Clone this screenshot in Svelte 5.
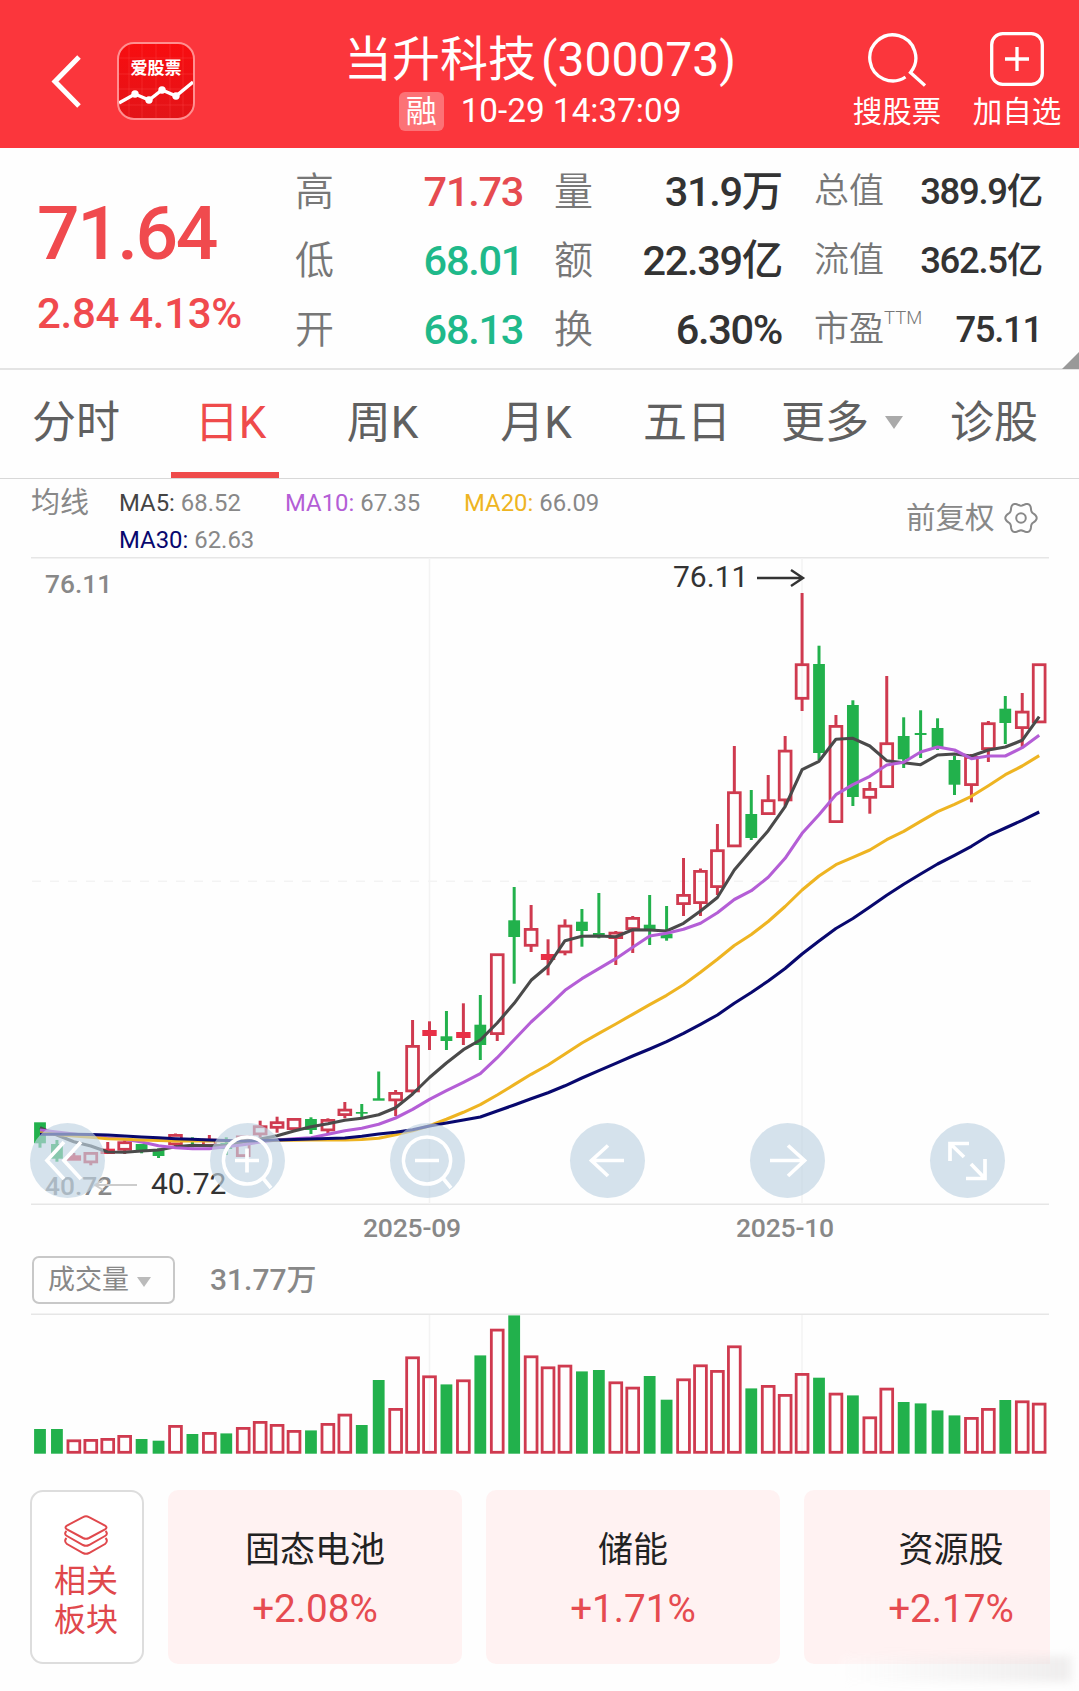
<script lang="ts">
	type Candle = [color: 'r' | 'g', high: number, top: number, bottom: number, low: number, volume: number];

	const FIRST_X = 40;
	const STEP = 16.935;
	const BODY = 11.8;
	const STROKE = 2.8;
	const VOLUME_BASE = 1453.7;

	const candles: Candle[] = [
		['g', 1122.3, 1122.3, 1143.3, 1147.7, 24.7],
		['g', 1140, 1144, 1158.7, 1161.7, 24.7],
		['r', 1153, 1155.3, 1160.7, 1160.7, 14.3],
		['r', 1152, 1152, 1163.3, 1165.3, 14.7],
		['r', 1142, 1148.7, 1154, 1154, 15.7],
		['r', 1140, 1141.3, 1150.7, 1154, 18.7],
		['g', 1144, 1144, 1150.7, 1153.3, 14.7],
		['g', 1148.3, 1149.3, 1156, 1158, 13],
		['r', 1133.5, 1134, 1145.3, 1148, 28.7],
		['g', 1137.3, 1140, 1142, 1147.3, 19.7],
		['r', 1135, 1138.7, 1146.7, 1147, 21.7],
		['g', 1137.3, 1143, 1149, 1155, 20.3],
		['r', 1135.5, 1135.5, 1157, 1157, 26.7],
		['r', 1120.7, 1125.3, 1135.3, 1137.3, 32.7],
		['r', 1116.7, 1121.3, 1128.7, 1132.7, 29.7],
		['r', 1118, 1118, 1130, 1131.3, 23.7],
		['g', 1117.3, 1119, 1130, 1134, 23.3],
		['r', 1118.3, 1119, 1131.3, 1133.3, 30.7],
		['r', 1102, 1108.7, 1116, 1118.3, 40],
		['g', 1104, 1112, 1113.7, 1118.7, 28.7],
		['g', 1071.5, 1098.3, 1100.7, 1100.7, 73.7],
		['r', 1090, 1092, 1101.3, 1116, 45.7],
		['r', 1020, 1045, 1092.3, 1093, 97.3],
		['r', 1021.3, 1030, 1036, 1050, 78.3],
		['g', 1011, 1036.3, 1041, 1050, 69.3],
		['r', 1003.3, 1032, 1038, 1045, 74.3],
		['g', 995, 1024.7, 1045, 1060, 98.3],
		['r', 953.3, 953.3, 1035, 1041, 125],
		['g', 887, 920.3, 937, 983.7, 138.3],
		['r', 905, 928, 946.7, 952, 98.3],
		['r', 939.3, 954, 960, 975.3, 87.3],
		['r', 919.3, 924.7, 953.3, 955.3, 89],
		['g', 909, 921.7, 931, 946.7, 82.3],
		['g', 893, 933, 937, 938.3, 83.7],
		['r', 931, 931.7, 939, 965, 72.3],
		['r', 916, 917, 930, 953, 67],
		['g', 895, 924.7, 931, 945, 77.7],
		['g', 906, 933.7, 938.3, 940.7, 54],
		['r', 858, 894, 905, 916, 75.3],
		['r', 868.5, 870, 904, 916, 89.3],
		['r', 824, 849.3, 888, 895, 83.7],
		['r', 746, 791.3, 847.3, 847.3, 108.3],
		['g', 790, 814, 838, 840, 65.3],
		['r', 775, 799.3, 815, 815, 68.7],
		['r', 736, 749.7, 801.3, 806, 59.7],
		['r', 593, 663.3, 699.7, 711, 80.7],
		['g', 645.7, 664, 753, 760, 76],
		['r', 715, 725, 823, 823, 61],
		['g', 700.3, 705, 797, 806, 58.3],
		['r', 782, 788, 798.7, 813.7, 37.3],
		['r', 676, 742.3, 788, 788, 66],
		['g', 717.3, 736, 759.3, 768, 51.7],
		['g', 710.3, 733, 735, 758, 50.3],
		['g', 718.3, 728, 747.3, 750, 43.3],
		['g', 756, 760, 784.7, 795, 38.3],
		['r', 754, 756, 786, 802.3, 36.7],
		['r', 721, 722.3, 750, 762, 45.7],
		['g', 696, 708.7, 723, 744, 53.7],
		['r', 693, 710.7, 729, 748, 53.3],
		['r', 663.3, 663.3, 723.3, 723.3, 51]
	];

	const averages = [
		{
			color: '#4a4a4a',
			values: [
				1127.7, 1135, 1141.7, 1146, 1152, 1152.3, 1151, 1150, 1146.7, 1145.3, 1145.7, 1145.3,
				1142, 1139, 1135.7, 1131, 1126.7, 1123.7, 1120.3, 1118.3, 1114.7, 1107.7, 1094, 1077.5,
				1063, 1049.7, 1040, 1023, 1003.3, 980.3, 966, 940.7, 936.3, 936, 936.7, 929.7, 930, 931,
				923.3, 911, 897.5, 870, 850, 830.7, 806.7, 769.7, 761.3, 739.3, 738.3, 746, 760.7, 762.7,
				764.7, 755, 754, 756, 750, 747, 740.3, 716.7
			]
		},
		{
			color: '#b45ed6',
			values: [
				1130, 1132, 1134, 1136, 1137.7, 1139.3, 1142, 1145.7, 1147.7, 1148.7, 1148.7, 1146.7,
				1144.7, 1142, 1140, 1138.7, 1137.7, 1134.3, 1130.7, 1128.3, 1124.3, 1118, 1109.3, 1099.3,
				1090.7, 1082.3, 1073.7, 1057.7, 1039.7, 1022, 1006.7, 990.3, 978.7, 968.7, 958.7, 947.3,
				936, 933.3, 929.3, 923.3, 912.7, 899.5, 890.7, 877.3, 858.3, 833.3, 814.7, 794.7, 784.7,
				776.3, 765, 762.3, 752, 747, 750, 758.7, 756, 756, 747.7, 735.3
			]
		},
		{
			color: '#eeb422',
			values: [
				1133, 1134.5, 1136, 1137.3, 1138.7, 1139.3, 1140, 1140.5, 1141, 1141, 1141, 1140.8,
				1140.7, 1140.5, 1140.3, 1140.2, 1140, 1140, 1140, 1139.5, 1138.3, 1134.8, 1130.7, 1125.7,
				1119.3, 1112.3, 1104.7, 1095, 1084.7, 1074.3, 1065, 1054, 1043, 1033.3, 1024, 1014.3,
				1004.7, 995.3, 984.7, 972.3, 959.3, 945.5, 934.5, 921.5, 906.5, 890, 876, 864.7, 857.3,
				850, 839.7, 831.3, 821.3, 811.7, 804.3, 796.3, 785.7, 774.7, 766, 755.7
			]
		},
		{
			color: '#08086e',
			values: [
				1134.3, 1134.3, 1134.3, 1134.5, 1135, 1136, 1137, 1137.8, 1138.7, 1139.3, 1140, 1140.5,
				1141, 1140.5, 1140, 1139.5, 1139, 1138.5, 1138, 1136.3, 1134, 1132.3, 1129.7, 1126, 1123,
				1120, 1117, 1111, 1105, 1098.8, 1092.7, 1085.8, 1078, 1070.7, 1063.3, 1056, 1049, 1041.7,
				1033.3, 1024.3, 1015, 1003.3, 992.5, 981, 968.5, 954, 941, 928.5, 918.5, 907, 895.3,
				884.3, 874, 864, 855.3, 846.3, 835.7, 828, 820.3, 812
			]
		}
	];

	const quotes = [
		[
			{ label: '高', value: '71.73', tone: 'up' },
			{ label: '低', value: '68.01', tone: 'down' },
			{ label: '开', value: '68.13', tone: 'down' }
		],
		[
			{ label: '量', value: '31.9万' },
			{ label: '额', value: '22.39亿' },
			{ label: '换', value: '6.30%' }
		],
		[
			{ label: '总值', value: '389.9亿' },
			{ label: '流值', value: '362.5亿' },
			{ label: '市盈', sup: 'TTM', value: '75.11' }
		]
	] as { label: string; value: string; tone?: string; sup?: string }[][];

	const tabs = ['分时', '日K', '周K', '月K', '五日', '更多', '诊股'];
	let active = $state('日K');

	const legend = [
		{ name: 'MA5:', value: '68.52', color: '#444' },
		{ name: 'MA10:', value: '67.35', color: '#b45ed6' },
		{ name: 'MA20:', value: '66.09', color: '#eeb422' },
		{ name: 'MA30:', value: '62.63', color: '#08086e' }
	];

	const sectors = [
		{ name: '固态电池', change: '+2.08%' },
		{ name: '储能', change: '+1.71%' },
		{ name: '资源股', change: '+2.17%' }
	];

	// circular chart controls, drawn in a 75x75 box
	const controls = [
		{ label: 'oldest', d: 'M34 19 17 37.5 34 56M51 19 34 37.5 51 56' },
		{ label: 'zoom in', d: 'M37 14a23.5 23.5 0 1 0 .1 0ZM52 54 61 65M25 37.5H49M37 25.5V49.5' },
		{ label: 'zoom out', d: 'M37 14a23.5 23.5 0 1 0 .1 0ZM52 54 61 65M25 37.5H49' },
		{ label: 'left', d: 'M38 22.5 21.5 37.5 38 53M22 37.5H54' },
		{ label: 'right', d: 'M38 22.5 54.5 37.5 38 53M20 37.5H54' },
		{ label: 'fullscreen', d: 'M20 38V20.5H39M21 21.5 34 34M36 55.5H55V36M54 54.5 41 41' }
	];

	const x = (i: number) => FIRST_X + i * STEP;
	const points = (values: number[]) => values.map((v, i) => `${x(i).toFixed(1)},${v}`).join(' ');

	// six-tooth gear outline around 17,17
	const gear = Array.from({ length: 72 }, (_, i) => {
		const a = (i * Math.PI) / 36;
		const r = 14 + 1.7 * Math.cos(6 * a);
		return `${(17 + r * Math.cos(a)).toFixed(2)},${(17 + r * Math.sin(a)).toFixed(2)}`;
	}).join(' ');
</script>

<div class="page">
	<header>
		<svg class="back" width="34" height="60" viewBox="0 0 34 60">
			<path d="M29 6 5 30.5 29 55" />
		</svg>
		<div class="logo">
			<svg width="74" height="74" viewBox="0 0 74 74">
				<path class="mesh" d="M0 14H74M0 30H74M0 45H74M0 61H74M10 0V74M23 0V74M37 0V74M51 0V74M64 0V74" />
				<polyline points="0,59 16,50 30,56 43,46 57,52 74,38" />
				<circle cx="16" cy="50" r="3.7" />
				<circle cx="30" cy="56" r="3.7" />
				<circle cx="43" cy="46" r="3.7" />
				<circle cx="57" cy="52" r="3.7" />
			</svg>
			<span>爱股票</span>
		</div>
		<div class="title">
			<h1>当升科技<span>(300073)</span></h1>
			<p><i>融</i>10-29 14:37:09</p>
		</div>
		<div class="actions">
			<button>
				<svg width="58" height="58" viewBox="0 0 58 58">
					<path d="M37.5 47A23 23 0 1 1 42.5 42.5L57 55.500" />
				</svg>
				搜股票
			</button>
			<button>
				<svg width="58" height="58" viewBox="0 0 58 58">
					<rect x="3.7" y="3.7" width="50.6" height="50.6" rx="11" />
					<path d="M29 17V41M17 29H41" />
				</svg>
				加自选
			</button>
		</div>
	</header>

	<section class="quote">
		<div class="price">
			<strong>71.64</strong>
			<span>2.84 4.13%</span>
		</div>
		{#each quotes as column, c}
			<dl class="col{c}">
				{#each column as q}
					<div>
						<dt>{q.label}{#if q.sup}<sup>{q.sup}</sup>{/if}</dt>
						<dd class={q.tone}>{q.value}</dd>
					</div>
				{/each}
			</dl>
		{/each}
		<div class="corner"></div>
	</section>

	<nav>
		{#each tabs as tab}
			<button class:active={tab === active} onclick={() => (active = tab)}>
				{tab}{#if tab === '更多'}<span class="caret"></span>{/if}
			</button>
		{/each}
	</nav>

	<section class="legend">
		<span class="name">均线</span>
		<div class="averages">
			{#each legend as ma}
				<span><b style="color: {ma.color}">{ma.name}</b> {ma.value}</span>
			{/each}
		</div>
		<div class="adjust">
			前复权
			<svg width="34" height="34" viewBox="0 0 34 34">
				<polygon points={gear} />
				<circle cx="17" cy="17" r="4.8" />
			</svg>
		</div>
	</section>

	<section class="chart">
		<svg width="1079" height="648" viewBox="0 557 1079 648">
			<path class="frame" d="M31 557.7H1049M31 1204.3H1049" />
			<path class="grid" d="M429.5 558V1204M802 558V1204" />
			<path class="grid dashed" d="M32 881.3H1040" />

			<text class="axis" x="45" y="592.5">76.11</text>
			<text class="axis" x="45" y="1195">40.72</text>
			<path class="low-arrow" d="M137 1185H95M103 1180 95 1185 103 1190" />
			<text class="mark" x="151" y="1194">40.72</text>
			<text class="mark" x="673" y="587">76.11</text>
			<path class="high-arrow" d="M757 578H803M791 570 803 578 791 586" />

			{#each candles as [color, high, top, bottom, low], i}
				{@const hollow = color === 'r' && bottom - top > 7}
				<g class={color}>
					{#if high < top}<line x1={x(i)} x2={x(i)} y1={high} y2={top + 1} />{/if}
					{#if low > bottom}<line x1={x(i)} x2={x(i)} y1={bottom - 1} y2={low} />{/if}
					{#if hollow}
						<rect
							class="hollow"
							x={x(i) - BODY / 2}
							y={top + STROKE / 2}
							width={BODY}
							height={bottom - top - STROKE}
						/>
					{:else}
						<rect
							x={x(i) - (color === 'r' ? 7.2 : BODY / 2)}
							y={top}
							width={color === 'r' ? 14.4 : BODY}
							height={bottom - top}
						/>
					{/if}
				</g>
			{/each}

			{#each averages as line}
				<polyline class="average" points={points(line.values)} stroke={line.color} />
			{/each}
		</svg>
		<div class="controls">
			{#each controls as control}
				<button aria-label={control.label}>
					<svg width="75" height="75" viewBox="0 0 75 75"><path d={control.d} /></svg>
				</button>
			{/each}
		</div>
	</section>

	<div class="dates">
		<span>2025-09</span>
		<span>2025-10</span>
	</div>

	<div class="volume-head">
		<button>成交量<span class="caret"></span></button>
		<span>31.77万</span>
	</div>

	<svg class="volume" width="1079" height="142" viewBox="0 1313 1079 142">
		<path class="frame" d="M31 1314.3H1049" />
		<path class="grid" d="M429.5 1315V1454M802 1315V1454" />
		{#each candles as [color, , , , , volume], i}
			<g class={color}>
				{#if color === 'r'}
					<rect
						class="hollow"
						x={x(i) - BODY / 2}
						y={VOLUME_BASE - volume + STROKE / 2}
						width={BODY}
						height={volume - STROKE}
					/>
				{:else}
					<rect x={x(i) - BODY / 2} y={VOLUME_BASE - volume} width={BODY} height={volume} />
				{/if}
			</g>
		{/each}
	</svg>

	<section class="sectors">
		<div class="related">
			<svg width="46" height="44" viewBox="0 0 46 44">
				<path d="M20 3.2Q23 1.5 26 3.2L42 11.5Q45 13.5 42 15.5L26 24Q23 25.5 20 24L4 15.5Q1 13.5 4 11.5Z" />
				<path d="M3.5 17Q.5 20 4 22L20 31Q23 32.5 26 31L42 22Q45.5 20 42.5 17" />
				<path d="M3.5 24Q.5 27 4 30L20 39Q23 40.5 26 39L42 30Q45.5 27 42.5 24" />
			</svg>
			<span>相关</span>
			<span>板块</span>
		</div>
		<div class="cards">
			{#each sectors as sector}
				<div class="card">
					<h2>{sector.name}</h2>
					<p>{sector.change}</p>
				</div>
			{/each}
		</div>
		<div class="smudge"></div>
	</section>
</div>

<style>
	:global(body) {
		background: #fefefe;
	}

	.page {
		width: 1079px;
		height: 1691px;
		overflow: hidden;
		font-family: Roboto, 'Noto Sans CJK SC', sans-serif;
		color: #333;
	}

	button {
		padding: 0;
		border: 0;
		background: none;
		font: inherit;
		color: inherit;
	}

	h1,
	h2,
	p,
	dl,
	dd {
		margin: 0;
		font-weight: 400;
	}

	svg {
		display: block;
		fill: none;
	}

	header {
		position: relative;
		display: flex;
		height: 148px;
		background: #fb363c;
		color: #fff;
	}

	header svg {
		stroke: #fff;
		stroke-width: 3.3;
	}

	header .back {
		margin: 51px 0 0 50px;
		stroke-width: 5;
	}

	.logo {
		position: relative;
		box-sizing: border-box;
		width: 78px;
		height: 78px;
		margin: 42px 0 0 33px;
		border: 2px solid #ff8f90;
		border-radius: 17px;
		background: linear-gradient(#f80d10, #e31418);
		overflow: hidden;
	}

	.logo circle {
		fill: #fff;
		stroke: none;
	}

	.logo .mesh {
		stroke: #ff4a4a;
		stroke-width: 1;
		opacity: 0.35;
	}

	.logo span {
		position: absolute;
		top: 13px;
		left: 0;
		width: 100%;
		font-size: 17px;
		font-weight: 700;
		line-height: 22px;
		text-align: center;
	}

	.title {
		width: 400px;
		margin-left: 145px;
		text-align: center;
	}

	.title h1 {
		margin-top: 29px;
		font-size: 48px;
		line-height: 62px;
		white-space: nowrap;
	}

	.title h1 span {
		margin-left: 5px;
	}

	.title p {
		display: flex;
		align-items: center;
		justify-content: center;
		height: 40px;
		font-size: 33.3px;
		line-height: 44px;
	}

	.title i {
		width: 45px;
		height: 39px;
		margin-right: 17px;
		border-radius: 6px;
		background: rgb(255 255 255 / 0.3);
		font-size: 31px;
		font-style: normal;
		line-height: 39px;
	}

	.actions {
		display: flex;
		gap: 30px;
		margin-left: 112px;
	}

	.actions button {
		display: flex;
		flex-direction: column;
		align-items: center;
		width: 90px;
		padding-top: 30px;
		font-size: 29.5px;
		line-height: 48px;
		white-space: nowrap;
	}

	.quote {
		position: relative;
		display: flex;
		box-sizing: border-box;
		height: 222px;
		padding-top: 9px;
		border-bottom: 2px solid #e4e4e4;
	}

	.price {
		width: 258px;
		padding-left: 37px;
		color: #f04a4e;
		font-weight: 500;
		white-space: nowrap;
	}

	.price strong {
		display: block;
		margin-top: 32px;
		font-size: 75px;
		font-weight: 500;
		line-height: 88px;
		letter-spacing: -2.5px;
	}

	.price span {
		display: block;
		margin-top: 12px;
		font-size: 42px;
		line-height: 50px;
		letter-spacing: -0.3px;
	}

	dl div {
		display: flex;
		align-items: center;
		justify-content: space-between;
		height: 69px;
		line-height: 50px;
		white-space: nowrap;
	}

	dt {
		color: #777;
		font-size: 39px;
		font-weight: 350;
	}

	dd {
		font-size: 41.5px;
		font-weight: 500;
		letter-spacing: -1.3px;
	}

	.col0 {
		width: 228px;
	}

	.col1 {
		width: 228px;
		margin-left: 31px;
	}

	.col2 {
		width: 228px;
		margin-left: 32px;
	}

	.col2 dt {
		font-size: 35px;
	}

	.col2 dd {
		font-size: 36.5px;
	}

	.col2 sup {
		font-size: 18.5px;
		line-height: 0;
		vertical-align: 17px;
	}

	.up {
		color: #e64b50;
	}

	.down {
		color: #1fb98a;
	}

	.corner {
		position: absolute;
		right: 0;
		bottom: -1px;
		border-bottom: 17px solid #999;
		border-left: 17px solid transparent;
	}

	nav {
		display: grid;
		grid-template-columns: 152px 157px 147px 160px 142px 168px 136px;
		height: 108px;
		border-bottom: 1px solid #d8d8d8;
		color: #606060;
		font-size: 44px;
		line-height: 50px;
	}

	nav button {
		position: relative;
		display: flex;
		align-items: center;
		justify-content: center;
		padding-bottom: 3px;
	}

	nav .active {
		color: #ef4b4b;
	}

	nav .active::after {
		content: '';
		position: absolute;
		bottom: 0;
		left: 19px;
		width: 108px;
		height: 6px;
		background: #ef4b4b;
	}

	.caret {
		margin-left: 16px;
		border: solid transparent;
		border-width: 13px 9px 0;
		border-top-color: #aaa;
	}

	.legend {
		display: flex;
		height: 78px;
		color: #888;
	}

	.legend .name {
		width: 88px;
		padding-left: 31px;
		font-size: 29px;
		line-height: 49px;
	}

	.averages {
		display: grid;
		grid-template-columns: 166px 179px 300px;
		grid-auto-rows: 37px;
		width: 787px;
		padding-top: 5px;
		font-size: 23.9px;
		line-height: 38px;
	}

	.averages b {
		font-weight: 400;
	}

	.adjust {
		display: flex;
		flex-shrink: 0;
		gap: 9px;
		align-items: center;
		font-size: 29.5px;
		line-height: 40px;
		white-space: nowrap;
	}

	.adjust svg {
		stroke: #888;
		stroke-width: 2;
	}

	.chart {
		position: relative;
		height: 648px;
	}

	.frame {
		stroke: #e6e6e6;
		stroke-width: 1.5;
	}

	.grid {
		stroke: #f3f3f3;
		stroke-width: 1.5;
	}

	.dashed {
		stroke-dasharray: 9 9;
	}

	.axis {
		fill: #888;
		font-size: 26.3px;
		font-weight: 500;
	}

	.mark {
		fill: #333;
		font-size: 30px;
	}

	.high-arrow {
		stroke: #333;
		stroke-width: 2.4;
	}

	.low-arrow {
		stroke: #ccc;
		stroke-width: 2;
	}

	.r {
		fill: #e82f46;
		stroke: none;
	}

	.g {
		fill: #22b14c;
		stroke: none;
	}

	.r line {
		stroke: #cf3a4f;
		stroke-width: 3;
	}

	.g line {
		stroke: #22b14c;
		stroke-width: 3;
	}

	.r .hollow {
		fill: none;
		stroke: #cf3a4f;
		stroke-width: 2.8;
	}

	.average {
		stroke-width: 3.1;
		stroke-linejoin: round;
	}

	.controls {
		position: absolute;
		top: 566px;
		right: 74px;
		left: 30px;
		display: flex;
		justify-content: space-between;
	}

	.controls button {
		width: 75px;
		height: 75px;
		border-radius: 50%;
		background: rgb(190 210 226 / 0.65);
	}

	.controls svg {
		stroke: #fff;
		stroke-width: 3.7;
	}

	.dates {
		display: flex;
		gap: 277px;
		height: 51px;
		padding-left: 363px;
		color: #888;
		font-size: 26.5px;
		font-weight: 500;
		line-height: 45px;
	}

	.dates span {
		width: 96px;
		letter-spacing: -0.2px;
		white-space: nowrap;
	}

	.volume-head {
		display: flex;
		gap: 35px;
		align-items: center;
		height: 48px;
		margin-bottom: 9px;
		padding-left: 32px;
		color: #888;
		font-size: 30px;
		font-weight: 500;
		line-height: 40px;
	}

	.volume-head button {
		display: flex;
		align-items: center;
		box-sizing: border-box;
		width: 143px;
		height: 48px;
		padding-left: 14px;
		border: 2px solid #c8c8c8;
		border-radius: 7px;
		font-size: 27px;
		font-weight: 400;
	}

	.volume-head .caret {
		margin: 3px 0 0 8px;
		border-width: 10px 7.5px 0;
		border-top-color: #bbb;
	}

	.sectors {
		position: relative;
		display: flex;
		gap: 24px;
		padding: 35px 29px 0 30px;
	}

	.related {
		display: flex;
		flex-direction: column;
		flex-shrink: 0;
		align-items: center;
		box-sizing: border-box;
		width: 114px;
		height: 174px;
		padding: 22px 2px 0 0;
		border: 2px solid #ddd;
		border-radius: 13px;
		background: #fff;
		color: #e0484c;
		font-size: 32px;
		line-height: 39px;
	}

	.related svg {
		margin-bottom: 4px;
		stroke: #e0484c;
		stroke-width: 2;
	}

	.cards {
		display: flex;
		gap: 24px;
		overflow: hidden;
	}

	.card {
		flex-shrink: 0;
		width: 294px;
		height: 174px;
		border-radius: 10px;
		background: #fff2f2;
		text-align: center;
	}

	.card h2 {
		margin-top: 36px;
		color: #222;
		font-size: 35px;
		line-height: 50px;
	}

	.card p {
		margin-top: 8px;
		color: #e64b50;
		font-size: 38.7px;
		line-height: 50px;
	}

	.smudge {
		position: absolute;
		right: 8px;
		bottom: -18px;
		width: 230px;
		height: 26px;
		background: linear-gradient(90deg, rgb(255 255 255 / 0.3), rgb(225 222 222 / 0.5));
		filter: blur(4px);
	}
</style>
